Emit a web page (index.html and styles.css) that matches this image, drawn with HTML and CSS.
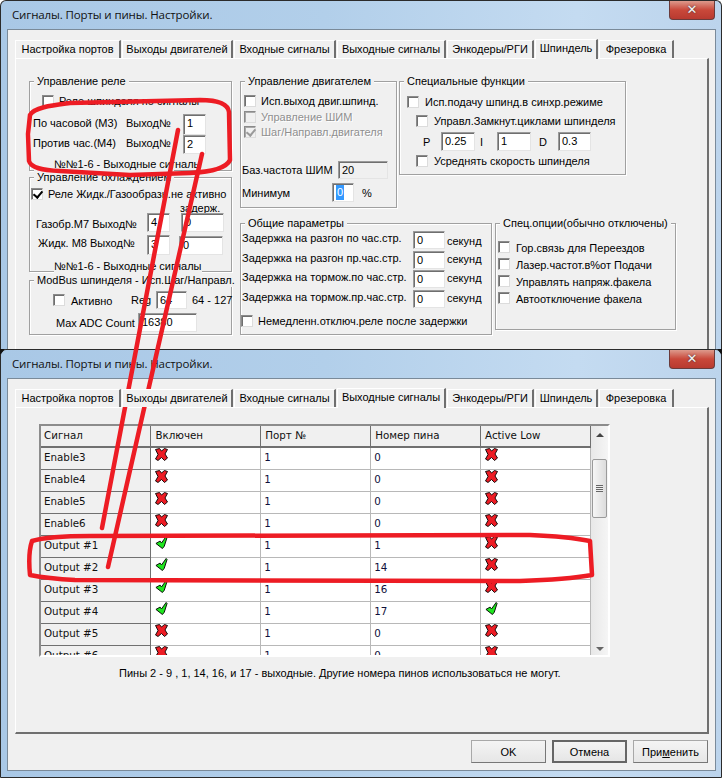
FILE: index.html
```html
<!DOCTYPE html>
<html lang="ru">
<head>
<meta charset="utf-8">
<title>Сигналы. Порты и пины. Настройки.</title>
<link rel="stylesheet" href="styles.css">
</head>
<body>
<svg class="defs" width="0" height="0" aria-hidden="true">
  <symbol id="ico-x" viewBox="0 0 13 13">
    <path d="M.5 1.500 4.500 .5 6.500 3 9.500 .5 12.500 1.500 10 6 12.500 10 9.500 12.500 6.500 9.500 3 12.500 .5 11 3 6.500Z" fill="#ed1c24" stroke="#000" stroke-width=".9"/>
  </symbol>
  <symbol id="ico-v" viewBox="0 0 13 14">
    <path d="M.5 8 5 5.500 6.500 7.500 11.500 .5 12.500 1.500 9.500 11 7.500 13.500Z" fill="#1fe61f" stroke="#000" stroke-width="1"/>
  </symbol>
</svg>

<section class="win win-a">
  <header class="title">
    <span class="title-text">Сигналы. Порты и пины. Настройки.</span>
    <span class="close">✕</span>
  </header>
  <div class="client">
    <nav class="tabs">
      <span class="tab t1">Настройка портов</span><span class="tab t2">Выходы двигателей</span><span class="tab t3">Входные сигналы</span><span class="tab t4">Выходные сигналы</span><span class="tab t5">Энкодеры/РГИ</span><span class="tab t6 on">Шпиндель</span><span class="tab t7">Фрезеровка</span>
    </nav>
    <div class="page">
      <div class="cols">
        <div class="col col1">
          <div class="grp g-relay">
            <div class="legend">Управление реле</div>
            <div class="row r-26 in12"><i class="cb"></i><span class="lbl ml5">Реле шпинделя по сигналы</span></div>
            <div class="row r-21 in3"><span class="lbl w93 up2">По часовой (M3)</span><span class="lbl w57 up2">Выход№</span><span class="ed e23 h21">1</span></div>
            <div class="row r-19 in3"><span class="lbl w93 up2">Против час.(M4)</span><span class="lbl w57 up2">Выход№</span><span class="ed e23 h19">2</span></div>
            <div class="row r-20 in24"><span class="lbl">№№1-6 - Выходные сигналы</span></div>
          </div>
          <div class="grp g-cool">
            <div class="legend">Управление охлаждением</div>
            <div class="row r-20 in1"><i class="cb on-c"></i><span class="lbl ml5">Реле Жидк./Газообразн.не активно</span></div>
            <div class="row r-7 in150"><span class="lbl">задерж.</span></div>
            <div class="row r-23 in6"><span class="lbl w111 dn1">Газобр.М7 Выход№</span><span class="ed e23 h19">4</span><span class="ed e43 h19 ml11">0</span></div>
            <div class="row r-22 in8"><span class="lbl w109 up2">Жидк. М8 Выход№</span><span class="ed e23 h20">3</span><span class="ed e44 h19 ml9">0</span></div>
            <div class="row r-20 in24"><span class="lbl bar">№№1-6 - Выходные сигналы</span></div>
          </div>
          <div class="grp g-modbus">
            <div class="legend">ModBus шпинделя - Исп.Шаг/Направл.</div>
            <div class="row r-20 mt3 in23"><i class="cb"></i><span class="lbl w60 ml6 dn1">Активно</span><span class="lbl w25">Reg</span><span class="ed e31 h18">64</span><span class="lbl ml5">64 - 127</span></div>
            <div class="row r-25 in26"><span class="lbl w82">Max ADC Count</span><span class="ed e59 h19">16380</span></div>
          </div>
        </div>
        <div class="col col2">
          <div class="top-pair">
            <div class="grp g-motor">
              <div class="legend">Управление двигателем</div>
              <div class="row r-19 mt3 in3"><i class="cb"></i><span class="lbl ml5">Исп.выход двиг.шпинд.</span></div>
              <div class="row r-13 in3"><i class="cb off"></i><span class="lbl dis ml5">Управление ШИМ</span></div>
              <div class="row r-17 in3"><i class="cb off off-c"></i><span class="lbl dis ml5">Шаг/Направл.двигателя</span></div>
              <div class="row r-20"></div>
              <div class="row r-20 in1"><span class="lbl w96">Баз.частота ШИМ</span><span class="ed e50 h18 gray">20</span></div>
              <div class="row r-25 in1"><span class="lbl w90">Минимум</span><span class="ed e22 h19"><b class="sel">0</b></span><span class="lbl ml8">%</span></div>
            </div>
            <div class="grp g-spec">
              <div class="legend">Специальные функции</div>
              <div class="row r-20 mt4 in7"><i class="cb"></i><span class="lbl ml6">Исп.подачу шпинд.в синхр.режиме</span></div>
              <div class="row r-18 in16"><i class="cb"></i><span class="lbl ml6">Управл.Замкнут.циклами шпинделя</span></div>
              <div class="row r-19 mt2 in23"><span class="lbl w18">P</span><span class="ed e34 h19">0.25</span><span class="lbl w22 ml5">I</span><span class="ed e34 h19">1</span><span class="lbl w27 ml8">D</span><span class="ed e33 h19">0.3</span></div>
              <div class="row r-20 in16"><i class="cb"></i><span class="lbl ml6">Усреднять скорость шпинделя</span></div>
            </div>
          </div>
          <div class="bottom-pair">
            <div class="grp g-gen">
              <div class="legend">Общие параметры</div>
              <div class="row r-20 in1"><span class="lbl w171 up3">Задержка на разгон по час.стр.</span><span class="ed e32 h18">0</span><span class="lbl ml2 dn1">секунд</span></div>
              <div class="row r-20 in1"><span class="lbl w171 up3">Задержка на разгон пр.час.стр.</span><span class="ed e32 h18">0</span><span class="lbl ml2 up1">секунд</span></div>
              <div class="row r-18 in1"><span class="lbl w171 up3">Задержка на тормож.по час.стр.</span><span class="ed e32 h18">0</span><span class="lbl ml2 up1">секунд</span></div>
              <div class="row r-22 in1"><span class="lbl w171 up3">Задержка на тормож.пр.час.стр.</span><span class="ed e32 h18">0</span><span class="lbl ml2 up1">секунд</span></div>
              <div class="row r-22"><i class="cb"></i><span class="lbl ml5">Немедленн.отключ.реле после задержки</span></div>
            </div>
            <div class="grp g-opts">
              <div class="legend">Спец.опции(обычно отключены)</div>
              <div class="row r-8"></div>
              <div class="row r-17 in2"><i class="cb"></i><span class="lbl ml6 dn1">Гор.связь для Переездов</span></div>
              <div class="row r-17 in2"><i class="cb"></i><span class="lbl ml6 dn1">Лазер.частот.в%от Подачи</span></div>
              <div class="row r-17 in2"><i class="cb"></i><span class="lbl ml6 dn1">Управлять напряж.факела</span></div>
              <div class="row r-17 in2"><i class="cb"></i><span class="lbl ml6 dn1">Автоотключение факела</span></div>
            </div>
          </div>
        </div>
      </div>
    </div>
  </div>
</section>

<section class="win win-b">
  <header class="title">
    <span class="title-text">Сигналы. Порты и пины. Настройки.</span>
    <span class="close">✕</span>
  </header>
  <div class="client">
    <nav class="tabs">
      <span class="tab t1">Настройка портов</span><span class="tab t2">Выходы двигателей</span><span class="tab t3">Входные сигналы</span><span class="tab t4 on">Выходные сигналы</span><span class="tab t5">Энкодеры/РГИ</span><span class="tab t6">Шпиндель</span><span class="tab t7">Фрезеровка</span>
    </nav>
    <div class="page page-b">
      <div class="gridbox">
        <table class="sheet">
          <thead>
            <tr><th>Сигнал</th><th>Включен</th><th>Порт №</th><th>Номер пина</th><th>Active Low</th></tr>
          </thead>
          <tbody>
            <tr><th>Enable3</th><td><svg class="ico"><use href="#ico-x"/></svg></td><td>1</td><td>0</td><td><svg class="ico"><use href="#ico-x"/></svg></td></tr>
            <tr><th>Enable4</th><td><svg class="ico"><use href="#ico-x"/></svg></td><td>1</td><td>0</td><td><svg class="ico"><use href="#ico-x"/></svg></td></tr>
            <tr><th>Enable5</th><td><svg class="ico"><use href="#ico-x"/></svg></td><td>1</td><td>0</td><td><svg class="ico"><use href="#ico-x"/></svg></td></tr>
            <tr><th>Enable6</th><td><svg class="ico"><use href="#ico-x"/></svg></td><td>1</td><td>0</td><td><svg class="ico"><use href="#ico-x"/></svg></td></tr>
            <tr><th>Output #1</th><td><svg class="ico"><use href="#ico-v"/></svg></td><td>1</td><td>1</td><td><svg class="ico"><use href="#ico-x"/></svg></td></tr>
            <tr><th>Output #2</th><td><svg class="ico"><use href="#ico-v"/></svg></td><td>1</td><td>14</td><td><svg class="ico"><use href="#ico-x"/></svg></td></tr>
            <tr><th>Output #3</th><td><svg class="ico"><use href="#ico-v"/></svg></td><td>1</td><td>16</td><td><svg class="ico"><use href="#ico-x"/></svg></td></tr>
            <tr><th>Output #4</th><td><svg class="ico"><use href="#ico-v"/></svg></td><td>1</td><td>17</td><td><svg class="ico"><use href="#ico-v"/></svg></td></tr>
            <tr><th>Output #5</th><td><svg class="ico"><use href="#ico-x"/></svg></td><td>1</td><td>0</td><td><svg class="ico"><use href="#ico-x"/></svg></td></tr>
            <tr><th>Output #6</th><td><svg class="ico"><use href="#ico-x"/></svg></td><td>1</td><td>0</td><td><svg class="ico"><use href="#ico-x"/></svg></td></tr>
          </tbody>
        </table>
        <div class="scroll">
          <span class="arrow up"></span>
          <span class="thumb"><i class="grip"></i></span>
          <span class="arrow down"></span>
        </div>
      </div>
      <p class="note">Пины 2 - 9 , 1, 14, 16, и 17 - выходные. Другие номера пинов использоваться не могут.</p>
    </div>
    <div class="buttons">
      <button class="btn">OK</button>
      <button class="btn def">Отмена</button>
      <button class="btn">При<u>м</u>енить</button>
    </div>
  </div>
</section>

<svg class="ink" width="725" height="779" viewBox="0 0 725 779" aria-hidden="true">
  <path d="M0 349H5L0 355Z M722 349H717L722 355Z" fill="#111"/>
  <g fill="none" stroke="#ed1c24" stroke-width="4.500" stroke-linecap="round" stroke-linejoin="round">
    <path d="M30 115 C34 107 55 105 70 103 L200 100 C218 100 228 104 229 112 L230 160 C226 169 210 172 190 173 L130 175 L60 171 C42 170 31 168 29 161 L28 134 Z"/>
    <path d="M178 130 L102 528"/>
    <path d="M202 154 L108 567"/>
    <path d="M32 541 C45 537 70 536 90 536 L530 535 C555 536 575 538 590 541 L592 575 C575 578 550 580 520 581 L75 580 C55 579 40 577 30 575 C29 565 29 550 32 541 Z"/>
  </g>
</svg>
</body>
</html>
```

FILE: styles.css
```css
* { box-sizing: border-box; }
html, body { margin: 0; padding: 0; width: 725px; height: 779px; overflow: hidden; background: #fff; }
body { font: 11px/14px "Liberation Sans", Arial, sans-serif; color: #000; position: relative; }
.defs { position: absolute; }

.win { width: 722px; overflow: hidden; border: 1px solid #2b2b2b; border-radius: 6px 6px 0 0;
  background: linear-gradient(90deg, #a9c8e6 0%, #b2cfea 45%, #c4dbf1 80%, #bcd4ec 100%); }
.win-a { height: 350px; border-bottom: 0; }
.win-b { height: 429px; margin-top: -1px; position: relative; }

.title { height: 28px; display: flex; align-items: flex-start; justify-content: space-between; padding-left: 11px; padding-right: 6px; }
.title-text { font: 11.500px/28px "Open Sans", sans-serif; color: #111; letter-spacing: -.12px; }
.close { width: 46px; height: 19px; border: 1px solid #6a3b3b; border-top: 0; border-radius: 0 0 4px 4px;
  background: linear-gradient(#dd9a8c, #c9483a 50%, #b83a30); color: #f2f2f2; text-align: center; font: bold 13px/18px "DejaVu Sans", sans-serif; text-shadow: 0 0 2px #333; }

.client { margin-left: 6px; width: 709px; height: 741px; border: 1px solid #7a8a99; background: #f0f0f0; padding: 10px 0 0 7px; }
.win-b .client { height: 393px; }

.tabs { display: flex; align-items: flex-end; height: 18px; position: relative; z-index: 1; }
.tab { height: 18px; border: 1px solid #fff; border-right: 2px solid #6f6f6f; border-bottom: 0; text-align: center; line-height: 17px; white-space: nowrap; background: #f0f0f0; flex: none; margin-right: 1px; }
.tab.on { height: 20px; margin-bottom: -1px; }
.t1 { width: 106px; } .t2 { width: 111px; } .t3 { width: 102px; } .t4 { width: 109px; }
.t5 { width: 87px; } .t6 { width: 63px; } .t7 { width: 75px; }

.page { width: 694px; height: 327px; border: 1px solid #fff; border-right: 2px solid #6f6f6f; border-bottom: 2px solid #6f6f6f; padding: 22px 0 0 13px; background: #f0f0f0; }
.page-b { padding: 16px 0 0 23px; }

.cols { display: flex; gap: 8px; }
.col1 { width: 203px; display: flex; flex-direction: column; gap: 6px; }
.col2 { display: flex; flex-direction: column; gap: 15px; }
.top-pair, .bottom-pair { display: flex; align-items: flex-start; }

.grp { border: 1px solid #a0a0a0; box-shadow: 1px 1px 0 #fff, inset 1px 1px 0 #fff; position: relative; }
.legend { margin: -8px 0 0 4px; padding: 0 3px; height: 14px; width: fit-content; background: #f0f0f0; white-space: nowrap; }
.g-relay { height: 90px; }
.g-cool { height: 95px; }
.g-modbus { height: 55px; margin-top: 2px; }
.g-motor { width: 157px; height: 127px; }
.g-spec { width: 227px; height: 94px; margin-left: 2px; }
.g-gen { width: 252px; height: 112px; }
.g-opts { width: 181px; height: 107px; margin-left: 3px; }

.row { display: flex; align-items: center; white-space: nowrap; }
.r-7 { height: 7px; } .r-8 { height: 8px; } .r-13 { height: 13px; } .r-17 { height: 17px; } .r-18 { height: 18px; } .r-19 { height: 19px; }
.r-20 { height: 20px; } .r-21 { height: 21px; } .r-22 { height: 22px; } .r-23 { height: 23px; } .r-25 { height: 25px; } .r-26 { height: 26px; }
.mt2 { margin-top: 2px; } .mt3 { margin-top: 3px; } .mt4 { margin-top: 4px; }

.in1 { padding-left: 1px; } .in2 { padding-left: 2px; } .in3 { padding-left: 3px; } .in6 { padding-left: 6px; } .in7 { padding-left: 7px; } .in8 { padding-left: 8px; }
.in12 { padding-left: 12px; } .in16 { padding-left: 16px; } .in23 { padding-left: 23px; } .in24 { padding-left: 24px; } .in26 { padding-left: 26px; } .in150 { padding-left: 150px; }
.ml2 { margin-left: 2px; } .ml5 { margin-left: 5px; } .ml6 { margin-left: 6px; } .ml8 { margin-left: 8px; } .ml9 { margin-left: 9px; } .ml11 { margin-left: 11px; }
.up1 { margin-bottom: 2px; } .up2 { margin-bottom: 4px; } .up3 { margin-bottom: 5px; } .dn1 { margin-top: 2px; }

.lbl { display: block; flex: none; }
.dis { color: #8f8f8f; text-shadow: 1px 1px 0 #fff; }
.bar { background: #f0f0f0; }
.w18 { width: 18px; } .w22 { width: 17px; } .w25 { width: 25px; } .w27 { width: 19px; } .w57 { width: 57px; } .w60 { width: 60px; } .w82 { width: 82px; }
.w90 { width: 90px; } .w93 { width: 93px; } .w96 { width: 96px; } .w109 { width: 109px; } .w111 { width: 111px; } .w171 { width: 171px; }

.cb { width: 12px; height: 12px; flex: none; background: #fff; border: 1px solid #8a8a8a; border-right-color: #dcdcdc; border-bottom-color: #dcdcdc; box-shadow: inset 1px 1px 0 #6f6f6f; position: relative; }
.cb.off { background: #f0f0f0; box-shadow: inset 1px 1px 0 #a8a8a8; }
.on-c::after, .off-c::after { content: ""; position: absolute; left: 3px; top: 0; width: 4px; height: 7px; border: solid #000; border-width: 0 2px 2px 0; transform: rotate(40deg); }
.off-c::after { border-color: #9a9a9a; }

.ed { display: block; flex: none; background: #fff; border: 1px solid #9a9a9a; border-right-color: #e4e4e4; border-bottom-color: #e4e4e4; box-shadow: inset 1px 1px 0 #6f6f6f; padding: 1px 0 0 3px; line-height: 15px; overflow: hidden; }
.gray { background: #f0f0f0; }
.h18 { height: 18px; } .h19 { height: 19px; } .h20 { height: 20px; } .h21 { height: 21px; }
.e22 { width: 22px; } .e23 { width: 23px; } .e31 { width: 31px; } .e32 { width: 32px; } .e33 { width: 33px; } .e34 { width: 34px; } .e43 { width: 43px; } .e44 { width: 44px; } .e50 { width: 50px; } .e59 { width: 59px; }
.sel { font-weight: 400; background: #3399ff; color: #fff; display: inline-block; padding: 0 1px; }

.gridbox { width: 571px; height: 233px; display: flex; overflow: hidden; border: 2px solid #8c8c8c; border-right: 2px solid #fff; border-bottom: 2px solid #fff; }
.sheet { border-collapse: collapse; table-layout: fixed; width: 550px; height: 231px; font: 10.300px/14px "DejaVu Sans", sans-serif; flex: none; }
.sheet th, .sheet td { height: 22px; padding: 0 0 2px 3px; text-align: left; font-weight: 400; border-right: 1px solid #b8b8b8; border-bottom: 1px solid #b8b8b8; background: #fff; vertical-align: middle; overflow: hidden; white-space: nowrap; color: #10103a; }
.sheet th { background: #f0f0f0; border-color: #707070; color: #111; }
.sheet thead th { height: 21px; border-bottom: 2px solid #707070; border-right: 1px solid #707070; padding-left: 4px; }
.sheet thead th:first-child { padding-left: 3px; }
.ico { width: 13px; height: 13px; display: block; margin: -5px 0 0 1px; }
.scroll { flex: 1; min-width: 0; background: linear-gradient(90deg, #e8e8e8, #f5f5f5); position: relative; display: flex; flex-direction: column; align-items: center; padding: 7px 0 4px; }
.arrow { width: 0; height: 0; border-left: 4px solid transparent; border-right: 4px solid transparent; flex: none; }
.arrow.up { border-bottom: 4px solid #444; }
.arrow.down { border-top: 4px solid #666; margin-top: auto; }
.thumb { width: 15px; height: 59px; margin-top: 22px; border: 1px solid #9a9a9a; border-radius: 2px; background: linear-gradient(90deg, #f6f6f6, #dcdcdc); display: flex; align-items: center; justify-content: center; }
.grip { width: 7px; height: 7px; background: repeating-linear-gradient(#666 0 1px, #eee 1px 2px); }

.note { margin: 9px 0 0 80px; white-space: nowrap; }
.buttons { display: flex; justify-content: flex-end; gap: 6px; padding: 6px 8px 0 0; width: 701px; }
.btn { width: 75px; height: 23px; font: 11px/14px "Liberation Sans", sans-serif; background: linear-gradient(#f4f4f4, #e6e6e6); border: 1px solid #a8a8a8; border-right-color: #777; border-bottom-color: #777; padding: 0; color: #000; }
.btn.def { border: 2px solid #666; }

.ink { position: absolute; left: 0; top: 0; pointer-events: none; }
```
